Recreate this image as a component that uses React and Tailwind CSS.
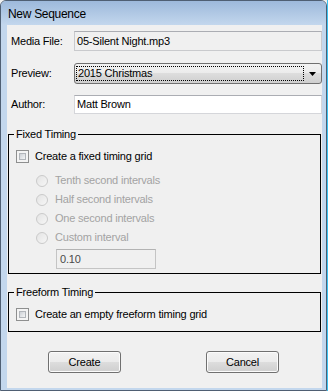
import React from 'react';

const Checkbox = () => (
  <span className="w-[13px] h-[13px] shrink-0 border border-[#8e8f8f] bg-[#f4f4f4] p-[2px] flex">
    <span className="flex-1 border border-[#b1b5ba] bg-linear-to-br from-[#cdd1d6] to-[#f4f5f6]"></span>
  </span>
);

const Radio = ({ label }) => (
  <div className="h-[19px] flex items-center pl-[27px]">
    <span className="w-[12px] h-[12px] shrink-0 rounded-full border border-[#cacaca] bg-linear-to-br from-[#e4e4e4] to-[#f6f6f6]"></span>
    <span className="ml-[7px] text-[#a3a3a3]">{label}</span>
  </div>
);

const Button = ({ children }) => (
  <button className="w-[73px] h-[22px] rounded-[3px] border border-[#707070] bg-[linear-gradient(#f2f2f2_0%,#ebebeb_50%,#dddddd_50%,#cfcfcf_100%)] shadow-[inset_0_0_0_1px_#fbfbfb] text-black text-[11px]">
    {children}
  </button>
);

export default function App() {
  return (
    <div className="w-[328px] h-[391px] flex bg-[#f0f0f0] font-['Liberation_Sans',Arial,sans-serif] text-[11px] tracking-[-0.2px] text-black">
      <div className="w-[327px] h-[391px] flex flex-col rounded-t-[6px] border border-[#4f5f73] bg-[#c3d7ed]">
        {/* Title bar */}
        <div className="h-[24px] shrink-0 flex items-center pl-[7px] rounded-t-[5px] bg-linear-to-b from-[#9db9db] to-[#c3d7ed]">
          <span className="text-[12px] tracking-[-0.3px] text-black pt-[1px]">New Sequence</span>
        </div>

        {/* Client area */}
        <div className="ml-[6px] w-[315px] h-[363px] bg-[#f0f0f0] flex flex-col pt-[6px]">
          <div className="flex items-center pl-[4px]">
            <span className="w-[63px]">Media File:</span>
            <div className="w-[248px] h-[20px] flex items-center pl-[2px] border border-[#c9cacd] border-t-[#abadb3] bg-[#f0f0f0]">
              05-Silent Night.mp3
            </div>
          </div>

          <div className="flex items-center pl-[4px] mt-[12px]">
            <span className="w-[63px]">Preview:</span>
            <div className="w-[248px] h-[21px] flex items-center rounded-[3px] border border-[#707070] bg-[linear-gradient(#f2f2f2_0%,#ebebeb_50%,#dddddd_50%,#cfcfcf_100%)] pl-[1px]">
              <div className="w-[228px] h-[15px] flex items-center pl-[1px] border border-dotted border-black">
                2015 Christmas
              </div>
              <div className="flex-1 flex justify-center">
                <svg width="7" height="4" viewBox="0 0 7 4">
                  <polygon points="0,0 7,0 3.5,4" fill="#000" />
                </svg>
              </div>
            </div>
          </div>

          <div className="flex items-center pl-[4px] mt-[11px]">
            <span className="w-[63px]">Author:</span>
            <div className="w-[248px] h-[19px] flex items-center pl-[2px] border border-[#d5d6da] border-t-[#abadb3] bg-white">
              Matt Brown
            </div>
          </div>

          {/* Fixed Timing */}
          <fieldset className="ml-[1px] mt-[13px] w-[313px] border border-black pb-[4px]">
            <legend className="ml-[5px] px-[2px] leading-[14px]">Fixed Timing</legend>
            <div className="flex items-center pl-[7px] mt-[9px] h-[13px]">
              <Checkbox />
              <span className="ml-[6px]">Create a fixed timing grid</span>
            </div>
            <div className="mt-[8px]">
              <Radio label="Tenth second intervals" />
              <Radio label="Half second intervals" />
              <Radio label="One second intervals" />
              <Radio label="Custom interval" />
            </div>
            <div className="ml-[47px] mt-[2px] w-[100px] h-[20px] flex items-center pl-[3px] border border-[#c4c4c4] border-t-[#b3b3b3] bg-[#f0f0f0] text-[#4a4a4a]">
              0.10
            </div>
          </fieldset>

          {/* Freeform Timing */}
          <fieldset className="ml-[1px] mt-[11px] w-[313px] border border-black pb-[10px]">
            <legend className="ml-[5px] px-[2px] leading-[14px]">Freeform Timing</legend>
            <div className="flex items-center pl-[7px] mt-[9px] h-[13px]">
              <Checkbox />
              <span className="ml-[6px]">Create an empty freeform timing grid</span>
            </div>
          </fieldset>

          <div className="flex mt-[19px] pl-[41px] gap-[85px]">
            <Button>Create</Button>
            <Button>Cancel</Button>
          </div>
        </div>
      </div>
      <div className="w-[1px] h-[391px] bg-[#3cc3f2]"></div>
    </div>
  );
}
